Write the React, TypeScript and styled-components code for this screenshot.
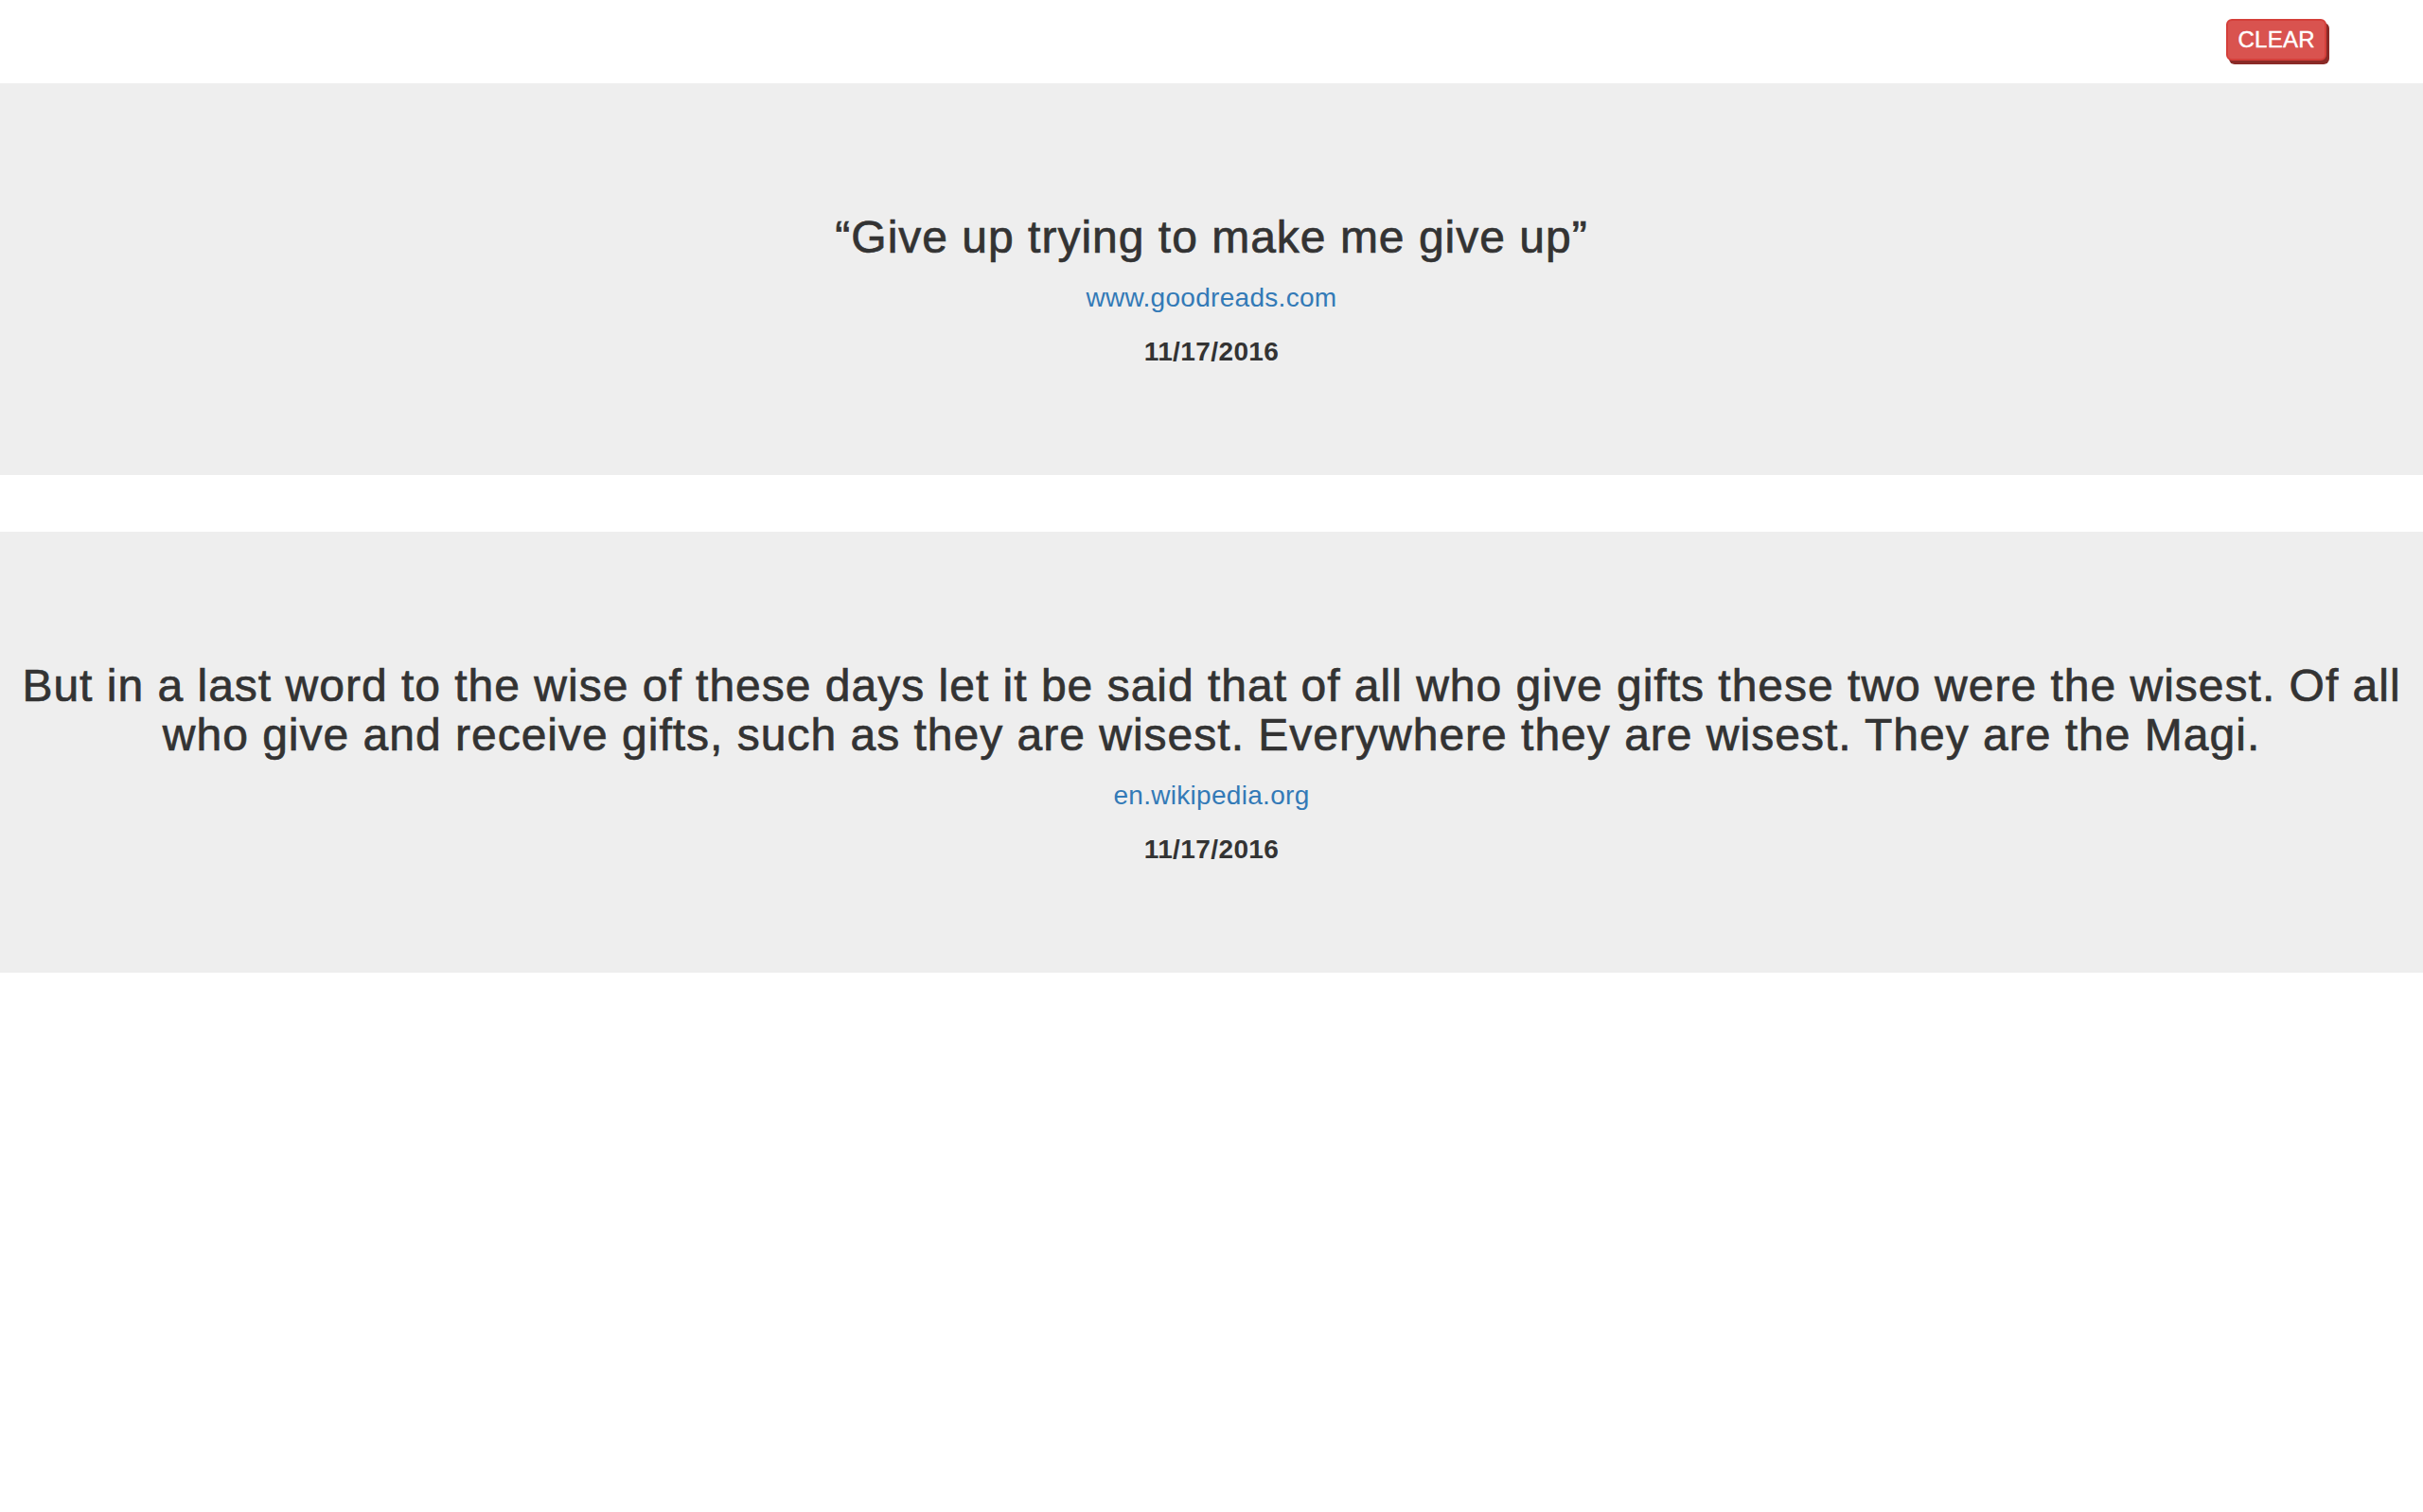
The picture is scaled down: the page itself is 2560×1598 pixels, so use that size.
import React from "react";
import styled, { createGlobalStyle } from "styled-components";

const GlobalStyle = createGlobalStyle`
  html, body {
    margin: 0;
    padding: 0;
    background: #ffffff;
  }
  body {
    font-family: "Liberation Sans", Arial, Helvetica, sans-serif;
    color: #333333;
    font-size: 28px;
    line-height: 40px;
  }
`;

const Page = styled.div`
  display: flex;
  flex-direction: column;
  width: 100%;
`;

const TopBar = styled.header`
  display: flex;
  justify-content: flex-end;
  align-items: flex-start;
  height: 88px;
  box-sizing: border-box;
  padding: 20px 102px 0 0;
`;

const ClearButton = styled.button`
  font-family: "Liberation Sans", Arial, Helvetica, sans-serif;
  font-size: 24px;
  line-height: 36px;
  letter-spacing: 0.3px;
  -webkit-text-stroke: 0.4px #ffffff;
  padding: 2px 10px;
  color: #ffffff;
  background: #d9534f;
  border: 2px solid #d43f3a;
  border-radius: 6px;
  box-shadow: 3px 4px 0 #8a2a27;
  cursor: pointer;
`;

const Jumbotron = styled.section`
  background: #eeeeee;
  padding: 96px 15px 110px;
  margin-bottom: 60px;
  text-align: center;
  display: flex;
  flex-direction: column;
  align-items: center;
`;

const Quote = styled.h3`
  margin: 41px 0 18px;
  font-size: 48px;
  line-height: 52px;
  font-weight: 400;
  letter-spacing: 1px;
  -webkit-text-stroke: 0.7px #333333;
  color: #333333;
`;

const SourceLink = styled.a`
  display: block;
  font-size: 28px;
  line-height: 40px;
  letter-spacing: 0.3px;
  color: #337ab7;
  text-decoration: none;
  margin-bottom: 17px;
`;

const DateLine = styled.div`
  font-size: 28px;
  line-height: 40px;
  font-weight: 700;
  letter-spacing: 0.4px;
  color: #333333;
`;

type Item = { quote: string; source: string; date: string };

const items: Item[] = [
  {
    quote: "\u201CGive up trying to make me give up\u201D",
    source: "www.goodreads.com",
    date: "11/17/2016",
  },
  {
    quote:
      "But in a last word to the wise of these days let it be said that of all who give gifts these two were the wisest. Of all who give and receive gifts, such as they are wisest. Everywhere they are wisest. They are the Magi.",
    source: "en.wikipedia.org",
    date: "11/17/2016",
  },
];

export default function App() {
  return (
    <Page>
      <GlobalStyle />
      <TopBar>
        <ClearButton>CLEAR</ClearButton>
      </TopBar>
      {items.map((it, i) => (
        <Jumbotron key={i}>
          <Quote>{it.quote}</Quote>
          <SourceLink href="#">{it.source}</SourceLink>
          <DateLine>{it.date}</DateLine>
        </Jumbotron>
      ))}
    </Page>
  );
}
